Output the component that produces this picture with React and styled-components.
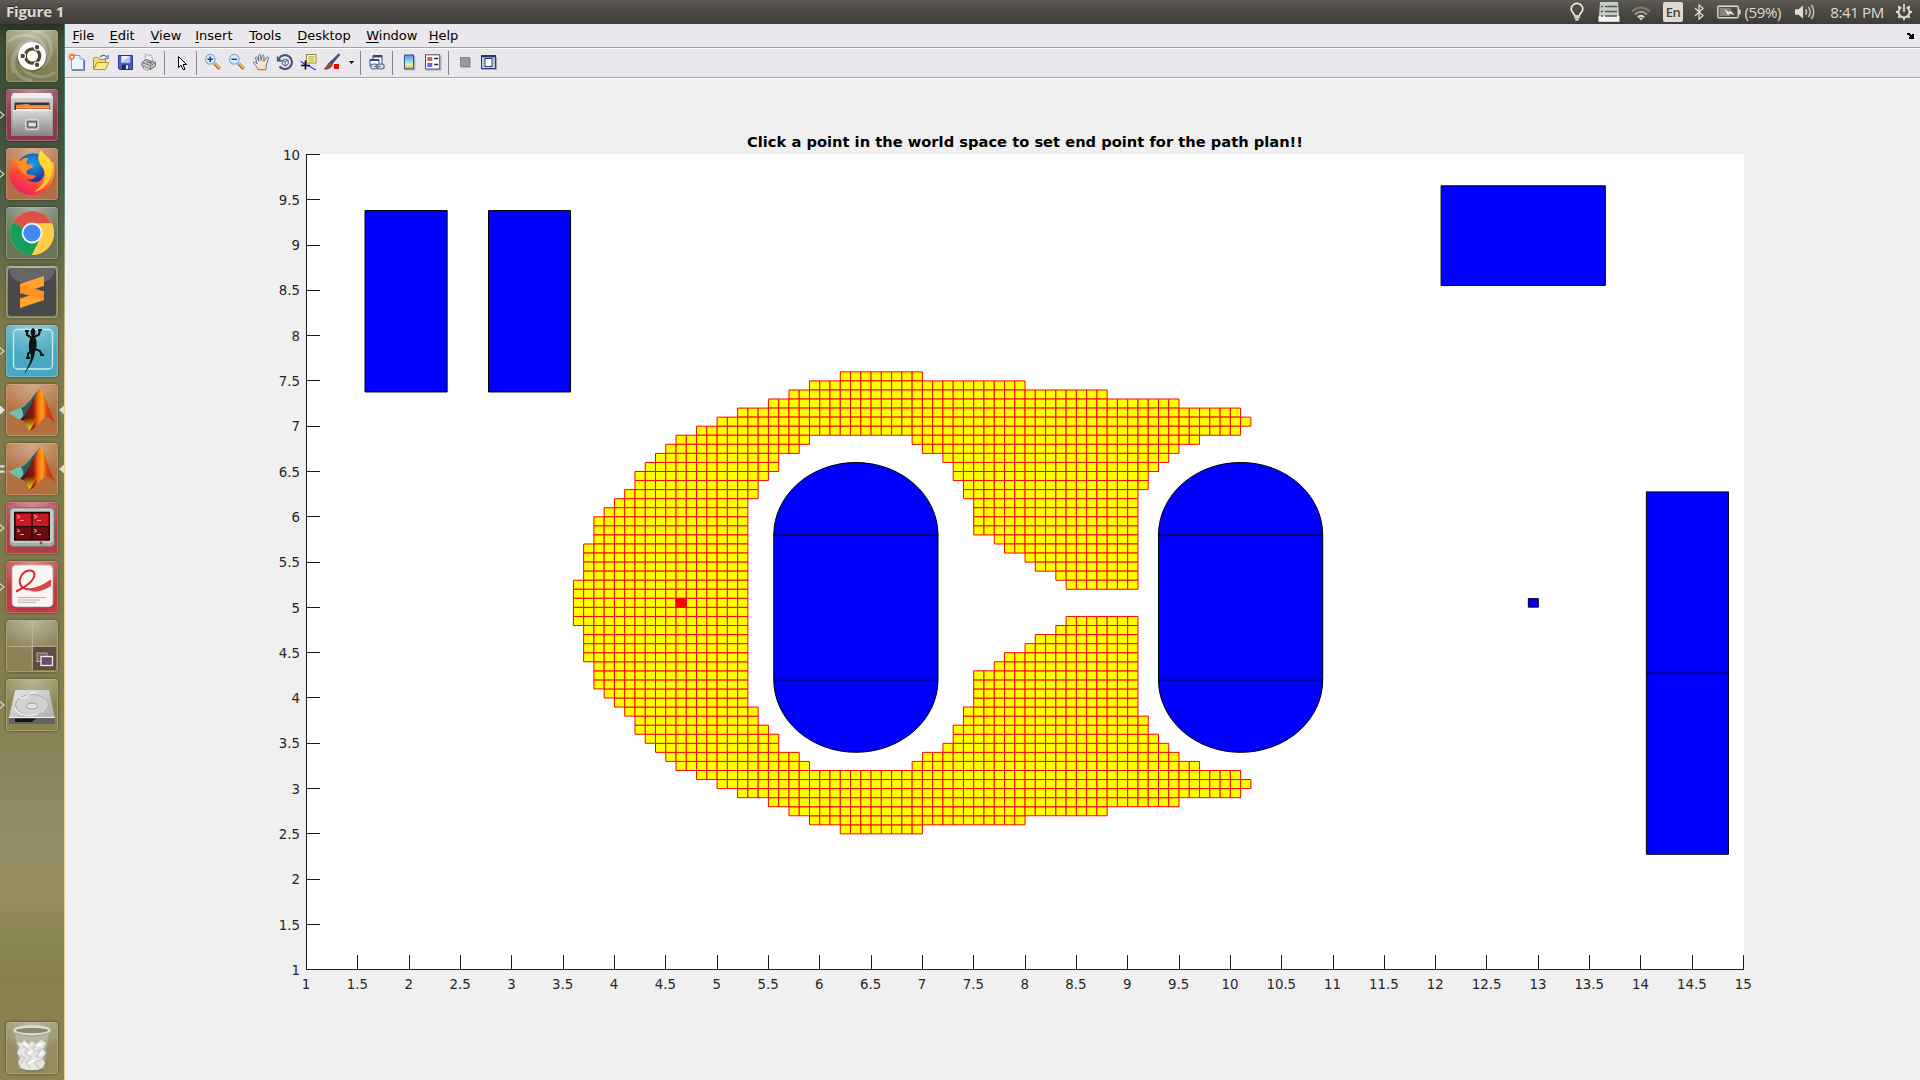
import React from "react";
import styled, { createGlobalStyle } from "styled-components";

const GlobalStyle = createGlobalStyle`
  * { box-sizing: border-box; }
  html, body { margin: 0; padding: 0; overflow: hidden; }
  body { width: 1920px; height: 1080px; background: #f0f0f0; }
  svg { display: block; flex: none; }
`;

const Screen = styled.div`
  width: 1920px;
  height: 1080px;
  display: flex;
  flex-direction: column;
  font-family: "DejaVu Sans", sans-serif;
`;

/* ---------- top panel ---------- */

const Panel = styled.header`
  height: 24px;
  flex: none;
  display: flex;
  justify-content: space-between;
  background: linear-gradient(#5f5d52 0, #56544c 3px, #3d3c38 100%);
  color: #dfdbd2;
  font-family: "Open Sans", "Noto Sans", sans-serif;
`;

const WindowTitle = styled.div`
  padding-left: 6px;
  font-size: 15px;
  line-height: 23px;
  font-weight: 700;
  letter-spacing: -0.15px;
  text-shadow: 0 -1px 0 #2b2a27;
`;

const Indicators = styled.div`
  display: flex;
  padding-right: 2px;
`;

const Indicator = styled.div`
  width: ${(p) => p.$w}px;
  height: 24px;
  display: flex;
  align-items: center;
  justify-content: ${(p) => p.$align || "center"};
  padding: 0 ${(p) => p.$pr || 0}px 0 ${(p) => p.$pl || 0}px;
  font-size: 15px;
  letter-spacing: ${(p) => p.$ls || 0}px;
  white-space: nowrap;
`;

const Keyboard = styled.span`
  width: 20px;
  height: 20px;
  border-radius: 2px;
  background: #dfdbd2;
  color: #45433e;
  font-size: 13px;
  font-weight: 600;
  line-height: 21px;
  text-align: center;
  letter-spacing: -0.6px;
`;

const Body = styled.div`
  flex: 1;
  display: flex;
  min-height: 0;
`;

/* ---------- launcher ---------- */

const Launcher = styled.aside`
  width: 65px;
  flex: none;
  display: flex;
  flex-direction: column;
  gap: 7px;
  padding: 6px 0 6px 6px;
  border-right: 1px solid #e3cf8e;
  border-image: linear-gradient(#3f7470 0, #4b8078 140px, #cdbd80 320px, #ecd998 400px, #e3cf8e) 1;
  background: linear-gradient(
    #26331f 0,
    #3b4d38 14px,
    #41533c 110px,
    #526146 190px,
    #6e7049 255px,
    #807a4c 310px,
    #7f7a4a 560px,
    #857f50 680px,
    #918b66 790px,
    #948e60 870px,
    #85804e 950px,
    #8d8252 100%
  );
`;

const Tile = styled.div`
  position: relative;
  width: 52px;
  height: 52px;
  flex: none;
  border-radius: 4px;
  background: ${(p) => p.$bg};
  box-shadow: 0 0 2px 1px rgba(20, 20, 10, 0.28), inset 0 0 0 1px rgba(255, 255, 255, 0.22),
    inset 0 1px 0 rgba(255, 255, 255, 0.2);
  margin-top: ${(p) => (p.$last ? "auto" : 0)};
`;

const Gloss = styled.div`
  position: absolute;
  inset: 1px;
  border-radius: 4px;
  background: radial-gradient(ellipse 80% 60% at 50% 0, rgba(255, 255, 255, 0.42), rgba(255, 255, 255, 0));
`;

const TileArt = styled.svg`
  position: relative;
`;

const Pip = styled.svg`
  position: absolute;
  top: 20px;
  ${(p) => (p.$right ? "left: 52px;" : "left: -6px;")}
`;

/* ---------- figure window ---------- */

const Figure = styled.main`
  flex: 1;
  display: flex;
  flex-direction: column;
  min-width: 0;
  background: #f0f0f0;
`;

const MenuBar = styled.nav`
  height: 25px;
  flex: none;
  display: flex;
  align-items: flex-start;
  padding-left: 7.5px;
  background: #ebe8ed;
  border-bottom: 1px solid #fff;
  box-shadow: inset 0 -1px 0 #a3a1a6;
`;

const MenuItem = styled.span`
  width: ${(p) => p.$w}px;
  font-size: 13px;
  line-height: 23px;
  color: #000;
  &::first-letter {
    text-decoration: underline;
    text-underline-offset: 2px;
  }
`;

const DockArrow = styled.svg`
  margin: 9px 6px 0 auto;
`;

const ToolBar = styled.div`
  height: 30px;
  flex: none;
  display: flex;
  background: #ebe8ed;
  border-bottom: 1px solid #fff;
  box-shadow: inset 0 -1px 0 #a3a1a6;
`;

const Tool = styled.div`
  width: ${(p) => p.$w || 24}px;
  padding-top: 3px;
  display: flex;
  justify-content: center;
`;

const Separator = styled.div`
  width: ${(p) => p.$w}px;
  padding: 2px 0 0 ${(p) => p.$l}px;
  &::before {
    content: "";
    display: block;
    width: 1px;
    height: 24px;
    background: #85838a;
  }
`;

const Canvas = styled.section`
  flex: 1;
`;

/* ---------- plot ---------- */

const OX = 65;
const OY = 79;
const X = (v) => 306.5 - OX + (v - 1) * 102.65;
const Y = (v) => 154.4 - OY + (10 - v) * 90.6;

// Explored columns in tenths of a unit, for each row above the axis of symmetry.
const upperRows = [
  [76, [62, 70]],
  [75, [59, 80]],
  [74, [57, 88]],
  [73, [55, 95]],
  [72, [52, 101]],
  [71, [50, 102]],
  [70, [48, 101]],
  [69, [46, 59], [69, 97]],
  [68, [45, 58], [70, 95]],
  [67, [44, 56], [72, 94]],
  [66, [43, 56], [73, 93]],
  [65, [42, 55], [73, 92]],
  [64, [42, 54], [74, 92]],
  [63, [41, 54], [74, 91]],
  [62, [40, 53], [75, 91]],
  [61, [39, 53], [75, 91]],
  [60, [38, 53], [75, 91]],
  [59, [38, 53], [75, 91]],
  [58, [38, 53], [77, 91]],
  [57, [37, 53], [78, 91]],
  [56, [37, 53], [80, 91]],
  [55, [37, 53], [81, 91]],
  [54, [37, 53], [83, 91]],
  [53, [36, 53], [84, 91]],
  [52, [36, 53]],
];
const rows = [
  ...upperRows,
  [51, [36, 53]],
  ...upperRows.map(([top, ...spans]) => [102 - top, ...spans]),
];

const cells = [];
rows.forEach(([top, ...spans]) =>
  spans.forEach(([a, b]) => {
    for (let c = a; c < b; c += 1) {
      const x0 = X(c / 10).toFixed(2);
      const x1 = X((c + 1) / 10).toFixed(2);
      const y0 = Y(top / 10).toFixed(2);
      const y1 = Y((top - 1) / 10).toFixed(2);
      cells.push(`M${x0} ${y0}H${x1}V${y1}H${x0}Z`);
    }
  })
);

const CellGroup = styled.g`
  fill: #ff0;
  stroke: #f00;
  stroke-width: 1;
`;
const Obstacle = styled.path`
  fill: #00f;
  stroke: #000;
  stroke-width: 1;
`;
const AxisLine = styled.path`
  fill: none;
  stroke: #1c1c1c;
  stroke-width: 1;
  shape-rendering: crispEdges;
`;
const TickLabel = styled.text`
  font: 13.33px "DejaVu Sans", sans-serif;
  fill: #262626;
`;
const PlotTitle = styled.text`
  font: bold 14.67px "DejaVu Sans", sans-serif;
  fill: #000;
`;

const box = (x0, y0, x1, y1) => `M${X(x0)} ${Y(y0)}H${X(x1)}V${Y(y1)}H${X(x0)}Z`;
const capsule = (c) => {
  const l = X(c - 0.8);
  const r = X(c + 0.8);
  const rx = 0.8 * 102.65;
  const ry = 0.8 * 90.6;
  return `M${l} ${Y(5.8)}A${rx} ${ry} 0 0 1 ${r} ${Y(5.8)}V${Y(4.2)}A${rx} ${ry} 0 0 1 ${l} ${Y(4.2)}Z
    M${l} ${Y(5.8)}H${r}M${l} ${Y(4.2)}H${r}`;
};
const xTicks = Array.from({ length: 29 }, (_, i) => 1 + i / 2);
const yTicks = Array.from({ length: 19 }, (_, i) => 1 + i / 2);

function Plot() {
  const left = 241;
  const base = 969 - OY;
  return (
    <svg width="1855" height="1001" viewBox="0 0 1855 1001">
      <rect x={left} y={154 - OY} width="1438" height="816" fill="#fff" />
      <CellGroup>
        {cells.map((d) => <path key={d} d={d} />)}
      </CellGroup>
      <path d={box(4.6, 5.1, 4.7, 5.0)} fill="#f00" stroke="#f00" />
      <Obstacle d={box(1.57, 9.38, 2.37, 7.378)} />
      <Obstacle d={box(2.773, 9.38, 3.572, 7.378)} />
      <Obstacle d={box(12.053, 9.653, 13.653, 8.553)} />
      <Obstacle d={`${box(14.053, 6.275, 14.853, 2.275)}M${X(14.053)} ${Y(4.275)}H${X(14.853)}`} />
      <Obstacle d={capsule(6.352)} />
      <Obstacle d={capsule(10.1)} />
      <Obstacle d={box(12.903, 5.097, 13, 5.003)} />
      <AxisLine d={`M${left + 0.5} ${154 - OY}V${base + 1}M${left} ${base + 0.5}H1679`} />
      {xTicks.map((t) => (
        <React.Fragment key={t}>
          <AxisLine d={`M${Math.floor(Math.min(X(t), 1678.5)) + 0.5} ${base - 14}V${base}`} />
          <TickLabel x={X(t) - 0.4} y={988.6 - OY} textAnchor="middle">{t}</TickLabel>
        </React.Fragment>
      ))}
      {yTicks.map((t) => (
        <React.Fragment key={t}>
          <AxisLine d={`M${left} ${Math.floor(Y(t)) + 0.5}h14`} />
          <TickLabel x="235" y={Math.round(Y(t) + 5.1)} textAnchor="end">{t}</TickLabel>
        </React.Fragment>
      ))}
      <PlotTitle x="960" y={146.6 - OY} textAnchor="middle" textLength="556">
        Click a point in the world space to set end point for the path plan!!
      </PlotTitle>
    </svg>
  );
}

/* ---------- toolbar icons ---------- */

const Icon = ({ children }) => (
  <svg width="20" height="20" viewBox="0 0 20 20">{children}</svg>
);

const NewIcon = () => (
  <Icon>
    <path d="M4.5 3.5H13L16.5 7V17.5H4.5Z" fill="#eaf4ff" stroke="#7f9fc4" />
    <path d="M13 3.5V7H16.5" fill="#fff" stroke="#7f9fc4" />
    <path d="M5 18.3H17.5V8" stroke="#5c6f88" fill="none" />
    <circle cx="5" cy="5" r="2" fill="#fff" stroke="#dd6f3d" strokeWidth="1.4" />
    <path d="M1.5 1.5l1.6 1.6M8.5 1.5L7 3M1.5 8.5L3 7M5 .8V2M1 5h1.2" stroke="#e27a4b" />
  </Icon>
);
const OpenIcon = () => (
  <Icon>
    <path d="M2.5 17.5V6.5l1-1H7l1.5 2H14.5V10" fill="#f7dc75" stroke="#b98a1d" />
    <path d="M2.5 17.5L6 10.5H17.5L14.5 17.5Z" fill="#ffe98d" stroke="#b98a1d" />
    <path d="M9 5.5C11 2.5 14 3 15.8 5M17 2.8V6.5H13.8" fill="none" stroke="#5b7695" strokeWidth="1.2" />
  </Icon>
);
const SaveIcon = () => (
  <Icon>
    <path d="M3.5 3.5H17.5V17.5H4.5L3.5 16.5Z" fill="#4a63d8" stroke="#2a3588" />
    <rect x="6.3" y="4" width="8.5" height="6.5" fill="#e9eefc" />
    <path d="M6.3 10L14.8 4V10.5H6.3Z" fill="#b7c6f3" />
    <rect x="6.8" y="12.5" width="7.5" height="5" fill="#252a5a" />
    <rect x="11" y="13.3" width="2.2" height="3.6" fill="#f0f0f8" />
  </Icon>
);
const PrintIcon = () => (
  <Icon>
    <path d="M6.5 2.5L12.5 3.5L14 9H6Z" fill="#e8f2fd" stroke="#8fa3b8" strokeWidth=".8" />
    <path d="M3 10.5L7 7.5L16.5 10.5V14L11.5 17.5L3 14Z" fill="#c6c6c6" stroke="#6c6c6c" />
    <path d="M3 10.5L11.5 13.5L16.5 10.5M11.5 13.5V17.5" fill="none" stroke="#777" />
    <path d="M4.5 14.5L10 16.8L9 18.5L4 16.5Z" fill="#f8f8f8" stroke="#777" strokeWidth=".7" />
    <path d="M7.8 9.8L13 11.2" stroke="#555" />
  </Icon>
);
const PointerIcon = () => (
  <Icon>
    <path d="M6.5 4.5V15.5L9 13.2L11 17.5H13L11 12.5H14.5Z" fill="#fff" stroke="#000" />
  </Icon>
);
const ZoomIcon = ({ plus }) => (
  <Icon>
    <path d="M11.5 11.5L16.8 16.8" stroke="#b86a25" strokeWidth="3.2" />
    <path d="M11.5 11L16.8 16.2" stroke="#ffb758" strokeWidth="1.7" />
    <circle cx="7.3" cy="7.3" r="4.9" fill="#d2efff" stroke="#8daccf" strokeWidth="1.2" />
    <path d={plus ? "M4.5 7.3h5.6M7.3 4.5v5.6" : "M4.5 7.3h5.6"} stroke="#263e92" strokeWidth="1.5" />
  </Icon>
);
const HandIcon = () => (
  <Icon>
    <path
      d="M7 17.5C6.5 15 3.8 12.8 2.5 11.2C2 10 3.5 9.5 4.5 10.5L6 11.8L4.5 6C4.3 4.4 6 4.4 6.5 5.8L7.8 9L7.6 3.5C7.7 2 9.4 2 9.6 3.5L10.2 8.6L11.2 3.8C11.6 2.4 13.2 2.8 13 4.3L12.8 9.3L15.4 5.5C16.4 4.5 18 5.2 17.3 6.6L15.4 13L14.8 17.5Z"
      fill="#ffdfc4"
      stroke="#5374a0"
      strokeWidth="1"
    />
    <path d="M7.2 17.8H14.8" stroke="#bd8b66" />
  </Icon>
);
const RotateIcon = () => (
  <Icon>
    <path d="M4 6.5A7 7 0 1 1 4.5 14.5" fill="none" stroke="#47577a" strokeWidth="2.2" />
    <path d="M1.8 3.5V9.5H7.3Z" fill="#47577a" />
    <path d="M7.3 8.3L10.2 7L13.2 8.3V12.2L10.2 14L7.3 12.2ZM7.3 8.3L10.2 9.6L13.2 8.3M10.2 9.6V14" fill="#edf4ff" stroke="#47577a" />
  </Icon>
);
const DataCursorIcon = () => (
  <Icon>
    <rect x="7.5" y="2.5" width="9.5" height="8.5" fill="#ffffac" stroke="#90844a" />
    <path d="M9.3 4.8h6M9.3 6.8h6M9.3 8.8h6" stroke="#a6a053" />
    <path d="M1.5 9.5C4 9.5 5 13 7.5 13.3C12 14 13 17 17 17.8" fill="none" stroke="#2222f0" strokeWidth="1.1" />
    <path d="M6.5 8.5V17.5M2 13.5H11" stroke="#000" strokeWidth="1.6" />
  </Icon>
);
const BrushIcon = () => (
  <Icon>
    <path d="M15.8 2.2L16.4 3L9.5 11.2L7.8 9.8Z" fill="#40547e" stroke="#40547e" strokeWidth="1.2" />
    <path d="M8 10.2C5 10.5 5.5 13.5 1.5 17C5.5 17.5 9 15 9.2 12Z" fill="#a54840" stroke="#613334" />
    <rect x="11" y="12" width="5" height="5" fill="#f00" />
  </Icon>
);
const LinkIcon = () => (
  <Icon>
    <path d="M6 3.5H15V12.5H6Z" fill="#fff" stroke="#314b7c" />
    <path d="M6 4.5H15" stroke="#314b7c" strokeWidth="2" />
    <path d="M3 7.5H12V14.5H3Z" fill="#fff" stroke="#314b7c" />
    <path d="M3 8H12" stroke="#314b7c" strokeWidth="2" />
    <rect x="3.7" y="12.2" width="7" height="4.6" rx="2.3" fill="#e0e6ef" stroke="#62728c" strokeWidth="1.3" />
    <rect x="9.9" y="12.2" width="7.3" height="4.6" rx="2.3" fill="#e0e6ef" stroke="#62728c" strokeWidth="1.3" />
    <path d="M7.2 14.5H13.7" stroke="#62728c" strokeWidth="1.4" />
  </Icon>
);
const ColorbarIcon = () => (
  <Icon>
    <defs>
      <linearGradient id="bar" x2="0" y2="1">
        <stop offset="0" stopColor="#7a7bea" />
        <stop offset=".4" stopColor="#6fd8f0" />
        <stop offset=".7" stopColor="#e4f29b" />
        <stop offset="1" stopColor="#f6a06f" />
      </linearGradient>
    </defs>
    <path d="M6 17.8H15.8V4" stroke="#9ea2b4" strokeWidth="1" fill="none" />
    <rect x="5.5" y="3" width="9" height="13.8" fill="url(#bar)" stroke="#3c4c78" />
  </Icon>
);
const LegendIcon = () => (
  <Icon>
    <path d="M3 18H18V4" stroke="#9ea2b4" fill="none" />
    <rect x="2.5" y="2.8" width="14.2" height="14.2" fill="#fff" stroke="#3c4c78" />
    <rect x="4.3" y="5" width="5" height="4" fill="#e25a56" />
    <rect x="4.3" y="11" width="5" height="4" fill="#6464e8" />
    <path d="M11.2 6.5h4M11.2 12.5h4" stroke="#222" strokeWidth="1.3" />
  </Icon>
);
const HideIcon = () => (
  <Icon>
    <rect x="6" y="6" width="10" height="10" fill="#bcbbbe" />
    <rect x="5.5" y="5.5" width="9" height="9" fill="#9c9b9c" stroke="#868587" />
  </Icon>
);
const ShowIcon = () => (
  <Icon>
    <path d="M3 17.3H17.6V5" stroke="#9aa0ae" fill="none" />
    <rect x="2.5" y="3.5" width="14" height="13" fill="#ccd8ee" stroke="#223c73" />
    <path d="M2.5 4.3H16.5" stroke="#223c73" strokeWidth="2.2" />
    <rect x="6" y="6.5" width="7" height="8" fill="#fff" stroke="#223c73" />
    <path d="M4.3 7v8M14.8 7v8" stroke="#8795b2" strokeDasharray="1 1" />
  </Icon>
);

/* ---------- launcher art ---------- */

const Art = ({ children }) => (
  <TileArt width="52" height="52" viewBox="0 0 52 52">{children}</TileArt>
);

const Ubuntu = () => (
  <Art>
    <path d="M26 1C47 0 51 26 36 37M2 12C19-3 43 9 40 27M8 43C2 28 11 12 27 11M26 50C7 49 3 31 13 20M49 42C36 52 17 45 14 32" fill="none" stroke="#fff" strokeOpacity=".2" strokeWidth="3" />
    <circle cx="26" cy="27" r="15" fill="#4b4830" opacity=".35" />
    <circle cx="26" cy="26" r="14" fill="#fff" />
    <circle cx="26.5" cy="26" r="7.2" fill="none" stroke="#4d4a2f" strokeWidth="3.3" />
    <g fill="#4d4a2f" stroke="#fff" strokeWidth="1.2">
      <circle cx="16.7" cy="26" r="2.8" />
      <circle cx="31" cy="17.3" r="2.8" />
      <circle cx="31" cy="34.8" r="2.8" />
    </g>
  </Art>
);
const Files = () => (
  <Art>
    <defs>
      <linearGradient id="cab" x2="0" y2="1">
        <stop offset="0" stopColor="#d8d8d8" />
        <stop offset="1" stopColor="#858585" />
      </linearGradient>
    </defs>
    <path d="M7 4H45L47 9V47H5V9Z" fill="url(#cab)" />
    <path d="M7 4H45L47 9H5Z" fill="#eee" />
    <rect x="8.5" y="13.5" width="35" height="9" fill="#373330" />
    <path d="M10 16L22 14.8L24 16H43V22H10Z" fill="#e48a45" />
    <path d="M10 18H43V22H10Z" fill="#f7ede2" />
    <path d="M10 19.3H43" stroke="#d8652e" strokeWidth="1.4" />
    <rect x="6.7" y="21" width="39" height="26" fill="url(#cab)" />
    <path d="M6.7 21.5H45.7" stroke="#f2f2f2" />
    <rect x="19.8" y="30.5" width="12.6" height="10" rx="2" fill="#999" stroke="#d5d5d5" strokeWidth="1.3" />
    <rect x="21.8" y="33" width="8.6" height="5" fill="#dedede" stroke="#444" />
  </Art>
);
const Firefox = () => (
  <Art>
    <defs>
      <linearGradient id="fox" x1=".8" y1="0" x2=".2" y2="1">
        <stop offset="0" stopColor="#ffe83c" />
        <stop offset=".35" stopColor="#ff9a1e" />
        <stop offset=".65" stopColor="#ff4a3a" />
        <stop offset="1" stopColor="#e21667" />
      </linearGradient>
      <radialGradient id="globe" cx=".5" cy=".3">
        <stop offset="0" stopColor="#13a5f0" />
        <stop offset="1" stopColor="#1c3c9c" />
      </radialGradient>
    </defs>
    <circle cx="27" cy="22" r="16.5" fill="url(#globe)" />
    <path
      d="M9 8L14 13C17 10 20 9 22 10L20 15C22 18 27 15 27 18C26 21 21 20 20 24C22 28 26 26 30 28C27 33 22 32 20 30C27 38 39 34 38 24C38 20 34 18 33 14C31 10 33 5 35 2C37 7 43 8 45 14L47 14C52 30 43 47 26 47C11 47 1 33 4 20C5 15 8 12 9 8Z"
      fill="url(#fox)"
    />
    <path d="M35 2C37 7 43 9 45 14C49 30 39 42 28 44C40 36 42 25 36 18C32 13 32 6 35 2Z" fill="#ffe13b" opacity=".75" />
    <path d="M9 9L14 14C20 10 22 11 20 16C21 19 27 16 26 19C21 21 19 24 21 28C14 24 10 17 9 9Z" fill="#ff8a28" />
  </Art>
);
const Chrome = () => (
  <Art>
    <circle cx="26" cy="26" r="22" fill="#ffcd46" />
    <path d="M26 26L7 15A22 22 0 0 1 45.8 16.4H26Z" fill="#dc5145" />
    <path d="M26 26L7 15A22 22 0 0 0 26 48L34.5 31Z" fill="#13a05e" />
    <path d="M26 26H26V16.4H45.8A22 22 0 0 1 26 48L34.5 31Z" fill="#ffcd46" />
    <circle cx="26" cy="26" r="10.4" fill="#f5f7fa" />
    <circle cx="26" cy="26" r="8.6" fill="#4688f4" />
  </Art>
);
const Sublime = () => (
  <Art>
    <rect x="2" y="2" width="48" height="48" rx="3" fill="#4a4a4a" />
    <ellipse cx="26" cy="4" rx="23" ry="14" fill="#bbb" opacity=".25" />
    <path d="M38 10L14 18V27.5L38 20Z" fill="#ffa52f" />
    <path d="M14 32.5L38 25V34L14 42Z" fill="#ffa52f" />
    <path d="M14 18V27L38 34V25.5L17 19Z" fill="#ff9021" />
  </Art>
);
const Gecko = () => (
  <Art>
    <rect x="7.5" y="4.5" width="39" height="39.5" rx="4" fill="none" stroke="#c8edf6" strokeWidth="1.3" />
    <path d="M27 3C30 4 30 9 28 11C32 15 31 23 29 27C28 36 23 42 18 49.5C21 42 25 38 25 30C22 24 22 15 26 11C24 9 24 5 27 3Z" fill="#101510" />
    <path d="M26 13L21 10V6M28 12L33 9.5L34 5M26 25L22 29V33M29 24L34 26L36 30" fill="none" stroke="#101510" strokeWidth="2.2" />
    <path d="M19 6h4M32 5h4M20 33h4M34 30h4" stroke="#101510" strokeWidth="1.8" />
  </Art>
);
const Matlab = () => (
  <Art>
    <defs>
      <linearGradient id="peak" x1="0" x2="1">
        <stop offset="0" stopColor="#35100d" />
        <stop offset=".38" stopColor="#8e1d0e" />
        <stop offset=".5" stopColor="#fb6b0d" />
        <stop offset=".62" stopColor="#ffa51c" />
        <stop offset=".75" stopColor="#d84512" />
        <stop offset="1" stopColor="#b32d12" />
      </linearGradient>
      <linearGradient id="glow" x2="0" y2="1">
        <stop offset=".65" stopColor="#ff0" stopOpacity="0" />
        <stop offset="1" stopColor="#ffe51f" />
      </linearGradient>
    </defs>
    <path d="M2.3 28.7L16 23C21 21 25 14 30 7L25 29L14 36Z" fill="#6fc0b2" />
    <path d="M15 24C22 22 26 12 34.7 4.3L24 28L14 36Q20 31 15 24Z" fill="#315a5b" />
    <path d="M34.7 4.3C38 8 43 27 49.7 39.7C44 33 40 31 35 37C31 42 28 45 23.3 46.7C21 41 19 36 14 36C24 29 27 11 34.7 4.3Z" fill="url(#peak)" />
    <path d="M34 9C36 25 30 39 23.3 46.7C21 42 20 38 17 37C26 31 31 20 34 9Z" fill="url(#glow)" />
  </Art>
);
const Terminal = () => (
  <Art>
    <rect x="3.5" y="5.5" width="45" height="39" rx="4" fill="#a9a8a5" stroke="#777" />
    <rect x="5" y="7" width="42" height="34" rx="3" fill="#c9c9c6" />
    <rect x="8" y="9.7" width="36" height="29" fill="#210303" />
    <rect x="9.5" y="11.5" width="16" height="12.5" fill="#c71824" />
    <rect x="26.7" y="11.5" width="16" height="12.5" fill="#c71824" />
    <rect x="9.5" y="25.2" width="16" height="12" fill="#6c0a10" />
    <rect x="26.7" y="25.2" width="16" height="12" fill="#6c0a10" />
    <path
      d="M11 13l3 1.7-3 1.7M14 18.5h4M28 13l3 1.7-3 1.7M31 18.5h4M11 27l3 1.7-3 1.7M14 32.5h4M28 27l3 1.7-3 1.7M31 32.5h4"
      stroke="#e8a5a9"
      fill="none"
      strokeWidth="1"
    />
    <circle cx="35" cy="41" r="1.4" fill="#e42525" />
  </Art>
);
const Pdf = () => (
  <Art>
    <rect x="6.5" y="5.2" width="40.5" height="42" rx="4" fill="#8c2628" opacity=".55" />
    <rect x="6.3" y="4.3" width="40.4" height="41.4" rx="4" fill="#f8f6f4" stroke="#dcd7d4" />
    <path
      d="M10 30.5C18 27 28 20 28.5 14C28.5 8.5 21 8 16.5 13C12 19 13 26 20 28C28 29.5 36 26 45 19.5"
      fill="none"
      stroke="#d92b2f"
      strokeWidth="2"
    />
    <path d="M20 28C28 28.5 37 24.5 45 19V25C40 28 34 31 27 30.5Z" fill="#dd4446" />
    <path d="M12 36.5h28M12 39h22M12 41.3h18" stroke="#b6b3b0" strokeWidth="1" />
  </Art>
);
const Workspaces = () => (
  <Art>
    <rect x="27" y="27" width="23" height="23" fill="#604a45" />
    <path d="M2 26.3H50M26.3 2V50" stroke="#cbc7a4" strokeOpacity=".7" />
    <rect x="31" y="33" width="10" height="8.5" fill="#76636a" stroke="#b5aba8" />
    <rect x="35" y="36.5" width="11.5" height="9" fill="#675061" stroke="#f3eeeb" strokeWidth="1.3" />
  </Art>
);
const Disk = () => (
  <Art>
    <defs>
      <linearGradient id="disk" x2="1" y2="1">
        <stop offset="0" stopColor="#e6e6e6" />
        <stop offset="1" stopColor="#b0b0b0" />
      </linearGradient>
    </defs>
    <path d="M9.3 11H43L48.7 38.3H3Z" fill="url(#disk)" />
    <ellipse cx="26" cy="26" rx="16.5" ry="10.5" fill="#d2d2d2" stroke="#ababab" />
    <ellipse cx="26" cy="27" rx="5.5" ry="3" fill="#e4e4e4" stroke="#999" />
    <path d="M9 29C11 36 23 38 32 35M13 18C21 22 22 12 30 13" fill="none" stroke="#f4f4f4" strokeWidth="1.2" />
    <path d="M3 38.3H48.7V45H3Z" fill="#636363" />
    <path d="M9 39.5H30L26 43H9Z" fill="#171717" />
    <path d="M3 38.5H48.7" stroke="#f7f7f7" />
  </Art>
);
const Trash = () => (
  <Art>
    <path d="M9 9L13 47Q26 51 38 47L43 9Z" fill="#deddd0" opacity=".35" />
    <path
      d="M11 20L16 21L18 18L23 22L26 19L30 22L35 18L40 21L37 27L40 31L36 36L39 41L36 46Q26 51 15 46L12 40L15 36L11 31L14 26Z"
      fill="#e5e5e3"
    />
    <path d="M16 24l6 3-3 4 6 4-5 5 4 6M28 23l-1 7 8-3-5 7 6 3-7 4 4 5M14 33l5 3-4 5" stroke="#c8c8c8" fill="none" strokeWidth="1.3" />
    <path d="M18 21l4 4M31 24l5-2M22 32l5-3M23 42l5-4M34 33l3-2" stroke="#fff" strokeWidth="2" />
    <ellipse cx="26" cy="8.5" rx="17.5" ry="4" fill="#8b8870" stroke="#ddddd9" strokeWidth="2.4" />
    <path d="M8 11Q26 17 44 11" stroke="#9c9b90" fill="none" />
    <path d="M13 47Q26 51 38 47" stroke="#77756a" fill="none" strokeWidth="1.3" />
  </Art>
);

const launcherItems = [
  { art: Ubuntu, bg: "linear-gradient(#918f68, #7e7b53)" },
  { art: Files, bg: "#8b3a48", left: "open" },
  { art: Firefox, bg: "#b36c45", left: "open" },
  { art: Chrome, bg: "#69765a" },
  { art: Sublime, bg: "#86825f" },
  { art: Gecko, bg: "#4aa9c0", left: "open" },
  { art: Matlab, bg: "#b2703f", left: "solid", right: true },
  { art: Matlab, bg: "#b2703f", left: "double", right: true },
  { art: Terminal, bg: "#b03d43", left: "open" },
  { art: Pdf, bg: "#b83e42", left: "open" },
  { art: Workspaces, bg: "#8b8357" },
  { art: Disk, bg: "#89844f", left: "open" },
  { art: Trash, bg: "#928c62", last: true },
];

const pipPaths = {
  open: <path d="M-1 2L4 6L-1 10" fill="none" stroke="#d9dac6" strokeWidth="1.1" />,
  solid: <path d="M0 1.5L5 6L0 10.5Z" fill="#e4e4dc" />,
  double: <path d="M0 3.4H4.5M0 8.6H4.5" stroke="#deded4" strokeWidth="2.2" />,
};

const menus = [
  ["File", 37],
  ["Edit", 41],
  ["View", 44.7],
  ["Insert", 54],
  ["Tools", 48],
  ["Desktop", 69],
  ["Window", 62.5],
  ["Help", 40],
];

export default function App() {
  return (
    <Screen>
      <GlobalStyle />
      <Panel>
        <WindowTitle>Figure 1</WindowTitle>
        <Indicators>
          <Indicator $w={24}>
            <svg width="20" height="20" viewBox="0 0 20 20" fill="none" stroke="#f3efd8">
              <path d="M7.7 14C7.7 11.5 4.2 10.5 4.2 7.2A5.8 5.8 0 0 1 15.8 7.2C15.8 10.5 12.3 11.5 12.3 14Z" strokeWidth="1.6" />
              <path d="M7.5 15.8h5M8.3 17.8h3.4" strokeWidth="1.5" />
            </svg>
          </Indicator>
          <Indicator $w={40}>
            <svg width="22" height="20" viewBox="0 0 22 20">
              <path d="M2 0H20L21 14V19.5H1V14Z" fill="#c9cdca" />
              <path d="M.5 14H21.5V19.7H.5Z" fill="#f3f5f4" />
              <path d="M3 4.5h2M7 4.5h12M3 9.5h2M7 9.5h12M3 14h2M7 14h12" stroke="#4d5350" strokeWidth="1.6" />
            </svg>
          </Indicator>
          <Indicator $w={24}>
            <svg width="20" height="18" viewBox="0 0 20 18" fill="none" strokeWidth="2">
              <path d="M1 8.5Q10 .5 19 8.5" stroke="#7d7b74" />
              <path d="M4 11.5Q10 6 16 11.5" stroke="#a5a29a" />
              <path d="M6.8 14.2Q10 11.5 13.2 14.2" stroke="#dfdbd2" />
              <path d="M8.5 15.3H11.5L10 17.2Z" fill="#dfdbd2" stroke="#dfdbd2" strokeWidth=".8" />
            </svg>
          </Indicator>
          <Indicator $w={40}><Keyboard>En</Keyboard></Indicator>
          <Indicator $w={12}>
            <svg width="12" height="18" viewBox="0 0 12 18">
              <path d="M2 5L10 12.7L6 16V2L10 5.3L2 13" fill="none" stroke="#dfdbd2" strokeWidth="1.3" />
            </svg>
          </Indicator>
          <Indicator $w={38} $align="flex-end" $pr={2}>
            <svg width="24" height="14" viewBox="0 0 24 14">
              <rect x=".8" y="1.3" width="20.4" height="11.4" rx="1" fill="none" stroke="#dfdbd2" strokeWidth="1.4" />
              <path d="M22.7 4.5v5" stroke="#dfdbd2" strokeWidth="1.8" />
              <rect x="2.5" y="3" width="11" height="8" fill="#85827c" />
              <path d="M7 3.5L12 7.5L13.5 5.5L18 10.5L12.5 8.5L11 10.5Z" fill="#f1eee6" />
            </svg>
          </Indicator>
          <Indicator $w={41} $align="flex-start" $pl={1.5} $ls={-0.35}>(59%)</Indicator>
          <Indicator $w={40} $pl={1}>
            <svg width="20" height="18" viewBox="0 0 20 18">
              <path d="M0 6.3H3.5L8 2.5V15.5L3.5 11.7H0Z" fill="#dfdbd2" />
              <path d="M10.5 6.3Q12.5 9 10.5 11.7M13.4 4Q17 9 13.4 14M16.4 1.8Q21 9 16.4 16.2" fill="none" stroke="#c9c5bc" strokeWidth="1.5" />
            </svg>
          </Indicator>
          <Indicator $w={66} $ls={-0.35}>8:41 PM</Indicator>
          <Indicator $w={28}>
            <svg width="18" height="18" viewBox="0 0 18 18" fill="none" stroke="#dfdbd2">
              <path d="M6.2 4.2A5.5 5.5 0 1 0 11.8 4.2" strokeWidth="2" />
              <path d="M9 1V9" strokeWidth="1.8" />
              <path d="M1 9h2.5M14.5 9H17M9 14.8V17M3.3 3.3l1.8 1.8M14.7 3.3l-1.8 1.8M3.3 14.7l1.8-1.8M14.7 14.7l-1.8-1.8" strokeWidth="2" />
            </svg>
          </Indicator>
        </Indicators>
      </Panel>
      <Body>
        <Launcher>
          {launcherItems.map(({ art: Picture, bg, left, right, last }, i) => (
            <Tile key={i} $bg={bg} $last={last}>
              <Gloss />
              <Picture />
              {left && <Pip width="6" height="12" viewBox="0 0 6 12">{pipPaths[left]}</Pip>}
              {right && (
                <Pip $right width="6" height="12" viewBox="0 0 6 12">
                  <path d="M6 1.5L1 6L6 10.5Z" fill="#deded0" />
                </Pip>
              )}
            </Tile>
          ))}
        </Launcher>
        <Figure>
          <MenuBar>
            {menus.map(([label, w]) => (
              <MenuItem key={label} $w={w}>{label}</MenuItem>
            ))}
            <DockArrow width="7" height="6" viewBox="0 0 7 6" shapeRendering="crispEdges">
              <path d="M0 0H2L5 3V1H7V6H2V4H4L1 2H0Z" fill="#000" />
            </DockArrow>
          </MenuBar>
          <ToolBar>
            <Tool><NewIcon /></Tool>
            <Tool><OpenIcon /></Tool>
            <Tool><SaveIcon /></Tool>
            <Tool><PrintIcon /></Tool>
            <Separator $w={9} $l={3} />
            <Tool><PointerIcon /></Tool>
            <Separator $w={7} $l={2} />
            <Tool><ZoomIcon plus /></Tool>
            <Tool><ZoomIcon /></Tool>
            <Tool><HandIcon /></Tool>
            <Tool><RotateIcon /></Tool>
            <Tool><DataCursorIcon /></Tool>
            <Tool><BrushIcon /></Tool>
            <Tool $w={12}>
              <svg width="5" height="20" viewBox="0 0 5 20"><path d="M0 9H5L2.5 12Z" fill="#000" /></svg>
            </Tool>
            <Separator $w={8} $l={3} />
            <Tool><LinkIcon /></Tool>
            <Separator $w={8} $l={3} />
            <Tool><ColorbarIcon /></Tool>
            <Tool><LegendIcon /></Tool>
            <Separator $w={8} $l={3} />
            <Tool><HideIcon /></Tool>
            <Tool><ShowIcon /></Tool>
          </ToolBar>
          <Canvas><Plot /></Canvas>
        </Figure>
      </Body>
    </Screen>
  );
}
